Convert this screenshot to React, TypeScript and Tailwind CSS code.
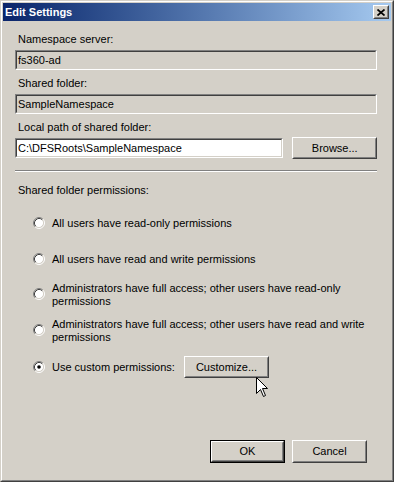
import React from "react";

const font = { fontFamily: '"Liberation Sans", Arial, sans-serif' };

function Btn({
  children,
  className = "",
  isDefault = false,
}: {
  children: React.ReactNode;
  className?: string;
  isDefault?: boolean;
}) {
  const inner = (
    <div className="w-full h-full border border-t-white border-l-white border-r-[#404040] border-b-[#404040]">
      <div className="w-full h-full border border-t-[#d4d0c8] border-l-[#d4d0c8] border-r-[#808080] border-b-[#808080] flex items-center justify-center text-[11px] leading-[13px] text-black">
        {children}
      </div>
    </div>
  );
  if (isDefault) {
    return <div className={`border border-black ${className}`}>{inner}</div>;
  }
  return <div className={className}>{inner}</div>;
}

function TextBox({
  value,
  className = "",
  readOnly = false,
}: {
  value: string;
  className?: string;
  readOnly?: boolean;
}) {
  return (
    <div
      className={`h-[20px] border border-t-[#808080] border-l-[#808080] border-r-white border-b-white ${className}`}
    >
      <div
        className={`w-full h-full border border-t-[#404040] border-l-[#404040] border-r-[#d4d0c8] border-b-[#d4d0c8] flex items-center pl-px text-[11px] leading-[13px] text-black ${
          readOnly ? "bg-[#d4d0c8]" : "bg-white"
        }`}
      >
        {value}
      </div>
    </div>
  );
}

function Radio({ checked = false }: { checked?: boolean }) {
  return (
    <svg width="12" height="12" viewBox="0 0 12 12" className="shrink-0">
      <circle cx="6" cy="6" r="4.5" fill="white" />
      <path d="M2.11 9.89 A5.5 5.5 0 0 1 9.89 2.11" fill="none" stroke="#808080" strokeWidth="1" />
      <path d="M2.82 9.18 A4.5 4.5 0 0 1 9.18 2.82" fill="none" stroke="#404040" strokeWidth="1" />
      <path d="M9.89 2.11 A5.5 5.5 0 0 1 2.11 9.89" fill="none" stroke="#ffffff" strokeWidth="1" />
      <path d="M9.18 2.82 A4.5 4.5 0 0 1 2.82 9.18" fill="none" stroke="#d4d0c8" strokeWidth="1" />
      {checked && <circle cx="6" cy="6" r="1.8" fill="black" />}
    </svg>
  );
}

function Option({ children, checked = false, tall = false }: { children: React.ReactNode; checked?: boolean; tall?: boolean }) {
  return (
    <div className="h-[26px] flex items-center gap-[7px]">
      <div className={tall ? "-mt-[3px] flex" : "flex"}>
        <Radio checked={checked} />
      </div>
      <div className="text-[11px] leading-[13px] text-black">{children}</div>
    </div>
  );
}

export default function App() {
  return (
    <div className="relative w-[394px] h-[482px] bg-[#d4d0c8] select-none" style={font}>
      <div className="w-full h-full border border-t-[#d4d0c8] border-l-[#d4d0c8] border-r-[#404040] border-b-[#404040]">
        <div className="w-full h-full border border-t-white border-l-white border-r-[#808080] border-b-[#808080] p-px flex flex-col">
          {/* Title bar */}
          <div className="h-[18px] flex items-start justify-between bg-gradient-to-r from-[#0a246a] to-[#a6caf0]">
            <div className="h-[18px] flex items-center pl-[2px] text-white font-bold text-[11px] leading-[13px]">
              Edit Settings
            </div>
            <div className="mt-[2px] mr-[2px] w-[16px] h-[14px] border border-t-white border-l-white border-r-[#404040] border-b-[#404040]">
              <div className="w-full h-full bg-[#d4d0c8] border border-t-[#d4d0c8] border-l-[#d4d0c8] border-r-[#808080] border-b-[#808080] flex items-center justify-center">
                <svg width="8" height="7" viewBox="0 0 8 7">
                  <path d="M0.5 0.5 L7.5 6.5 M7.5 0.5 L0.5 6.5" stroke="black" strokeWidth="1.7" fill="none" />
                </svg>
              </div>
            </div>
          </div>

          {/* Content */}
          <div className="flex-1 flex flex-col pl-[12px] pr-[14px]">
            <div className="mt-[12px] h-[13px] pl-[3px] text-[11px] leading-[13px] text-black">Namespace server:</div>
            <TextBox className="mt-[4px]" value="fs360-ad" readOnly />
            <div className="mt-[7px] h-[13px] pl-[3px] text-[11px] leading-[13px] text-black">Shared folder:</div>
            <TextBox className="mt-[4px]" value="SampleNamespace" readOnly />
            <div className="mt-[7px] h-[13px] pl-[3px] text-[11px] leading-[13px] text-black">Local path of shared folder:</div>
            <div className="mt-[3px] h-[23px] flex items-start">
              <TextBox className="mt-px w-[270px]" value="C:\DFSRoots\SampleNamespace" />
              <Btn className="ml-[9px] w-[85px] h-[22px]">Browse...</Btn>
            </div>
            <div className="mt-[10px] h-[2px] border-t border-t-[#808080] border-b border-b-white" />
            <div className="mt-[12px] h-[13px] pl-[3px] text-[11px] leading-[13px] text-black">Shared folder permissions:</div>
            <div className="mt-[13px] pl-[18px] flex flex-col gap-[10px]">
              <Option>All users have read-only permissions</Option>
              <Option>All users have read and write permissions</Option>
              <Option tall>
                Administrators have full access; other users have read-only
                <br />
                permissions
              </Option>
              <Option tall>
                Administrators have full access; other users have read and write
                <br />
                permissions
              </Option>
              <div className="h-[26px] flex items-center gap-[7px]">
                <Radio checked />
                <div className="w-[125px] text-[11px] leading-[13px] text-black">Use custom permissions:</div>
                <Btn className="w-[85px] h-[22px]">Customize...</Btn>
              </div>
            </div>
            <div className="mt-[60px] flex justify-end gap-[7px] pr-[10px]">
              <Btn isDefault className="w-[75px] h-[23px]">OK</Btn>
              <Btn className="w-[75px] h-[23px]">Cancel</Btn>
            </div>
          </div>
        </div>
      </div>
      {/* Mouse cursor */}
      <svg className="absolute left-[256px] top-[377px]" width="13" height="21" viewBox="0 0 13 21">
        <path
          d="M0.5 0.5 L0.5 16.5 L4.5 12.5 L7.5 19.5 L9.5 18.5 L6.5 11.5 L11.5 11.5 Z"
          fill="white"
          stroke="black"
          strokeWidth="1"
          strokeLinejoin="miter"
        />
      </svg>
    </div>
  );
}
